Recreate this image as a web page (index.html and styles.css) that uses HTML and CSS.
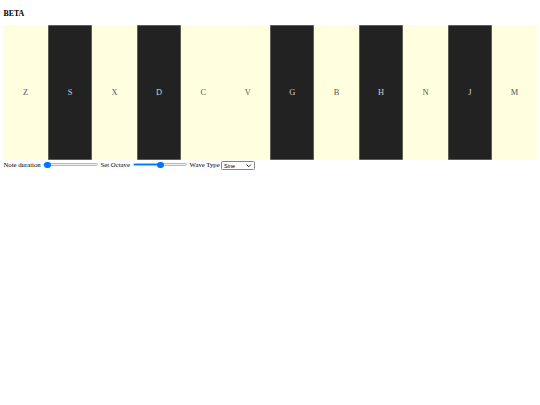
FILE: index.html
```html
<!DOCTYPE html>
<html>
<head>
<meta charset="utf-8">
<link rel="stylesheet" href="styles.css">
</head>
<body>
<h3 class="title">BETA</h3>
<div class="piano">
  <div class="key white">Z</div>
  <div class="key black">S</div>
  <div class="key white">X</div>
  <div class="key black">D</div>
  <div class="key white">C</div>
  <div class="key white">V</div>
  <div class="key black">G</div>
  <div class="key white">B</div>
  <div class="key black">H</div>
  <div class="key white">N</div>
  <div class="key black">J</div>
  <div class="key white">M</div>
</div>
<div class="controls">
  <label class="ctl">Note duration <input class="range" type="range" min="0" max="100" value="0" style="--p:0%"></label>
  <label class="ctl">Set Octave <input class="range" type="range" min="0" max="100" value="52" style="--p:52%"></label>
  <label class="ctl">Wave Type <span class="select-wrap"><select class="wave"><option>Sine</option><option>Square</option><option>Sawtooth</option><option>Triangle</option></select><svg class="chev" viewBox="0 0 10 6" width="5.5" height="3.3"><path d="M1 1 L5 5 L9 1" fill="none" stroke="#000" stroke-width="1.6"/></svg></span></label>
</div>
</body>
</html>
```

FILE: styles.css
```css
body {
  margin: 3.4px;
  margin-top: 0;
  font-family: "Liberation Serif", "Times New Roman", serif;
  color: #000;
  background: #fff;
}
.title {
  font-size: 7.9px;
  line-height: 9px;
  font-weight: bold;
  margin: 0;
  padding: 8.5px 0 7.5px;
}
.piano {
  display: grid;
  grid-template-columns: repeat(12, 1fr);
  height: 135px;
}
.key {
  display: flex;
  align-items: center;
  justify-content: center;
  font-size: 8.4px;
}
.white {
  background: #ffffe0;
  color: #555;
}
.black {
  background: #222222;
  color: #d0d0d0;
  box-shadow: inset 0 0 0 0.5px #9a9a90;
}
.controls {
  font-size: 6.75px;
  line-height: 10px;
  white-space: nowrap;
}
.ctl {
  margin-right: 0;
}
.range {
  -webkit-appearance: none;
  appearance: none;
  width: 54.4px;
  height: 7px;
  margin: 0 1px;
  padding: 0;
  background: transparent;
  vertical-align: -1px;
}
.range::-webkit-slider-runnable-track {
  height: 2.6px;
  border-radius: 2px;
  border: 0.5px solid #b8b8b8;
  background: linear-gradient(to right, #0075ff var(--p), #efefef var(--p));
}
.range::-webkit-slider-thumb {
  -webkit-appearance: none;
  appearance: none;
  width: 6.75px;
  height: 6.75px;
  border-radius: 50%;
  background: #0075ff;
  border: none;
  margin-top: -2.6px;
}
.select-wrap {
  position: relative;
  display: inline-block;
  vertical-align: -0.5px;
  margin-left: -0.5px;
}
.wave {
  -webkit-appearance: none;
  appearance: none;
  font-family: "Liberation Sans", Arial, sans-serif;
  font-size: 5.6px;
  width: 34px;
  height: 9px;
  padding: 0 0 0 2px;
  margin: 0;
  border: 0.5px solid #858585;
  border-radius: 1.5px;
  background: #fff;
  color: #000;
  display: block;
}
.chev {
  position: absolute;
  right: 3px;
  top: 3px;
  pointer-events: none;
}
```
